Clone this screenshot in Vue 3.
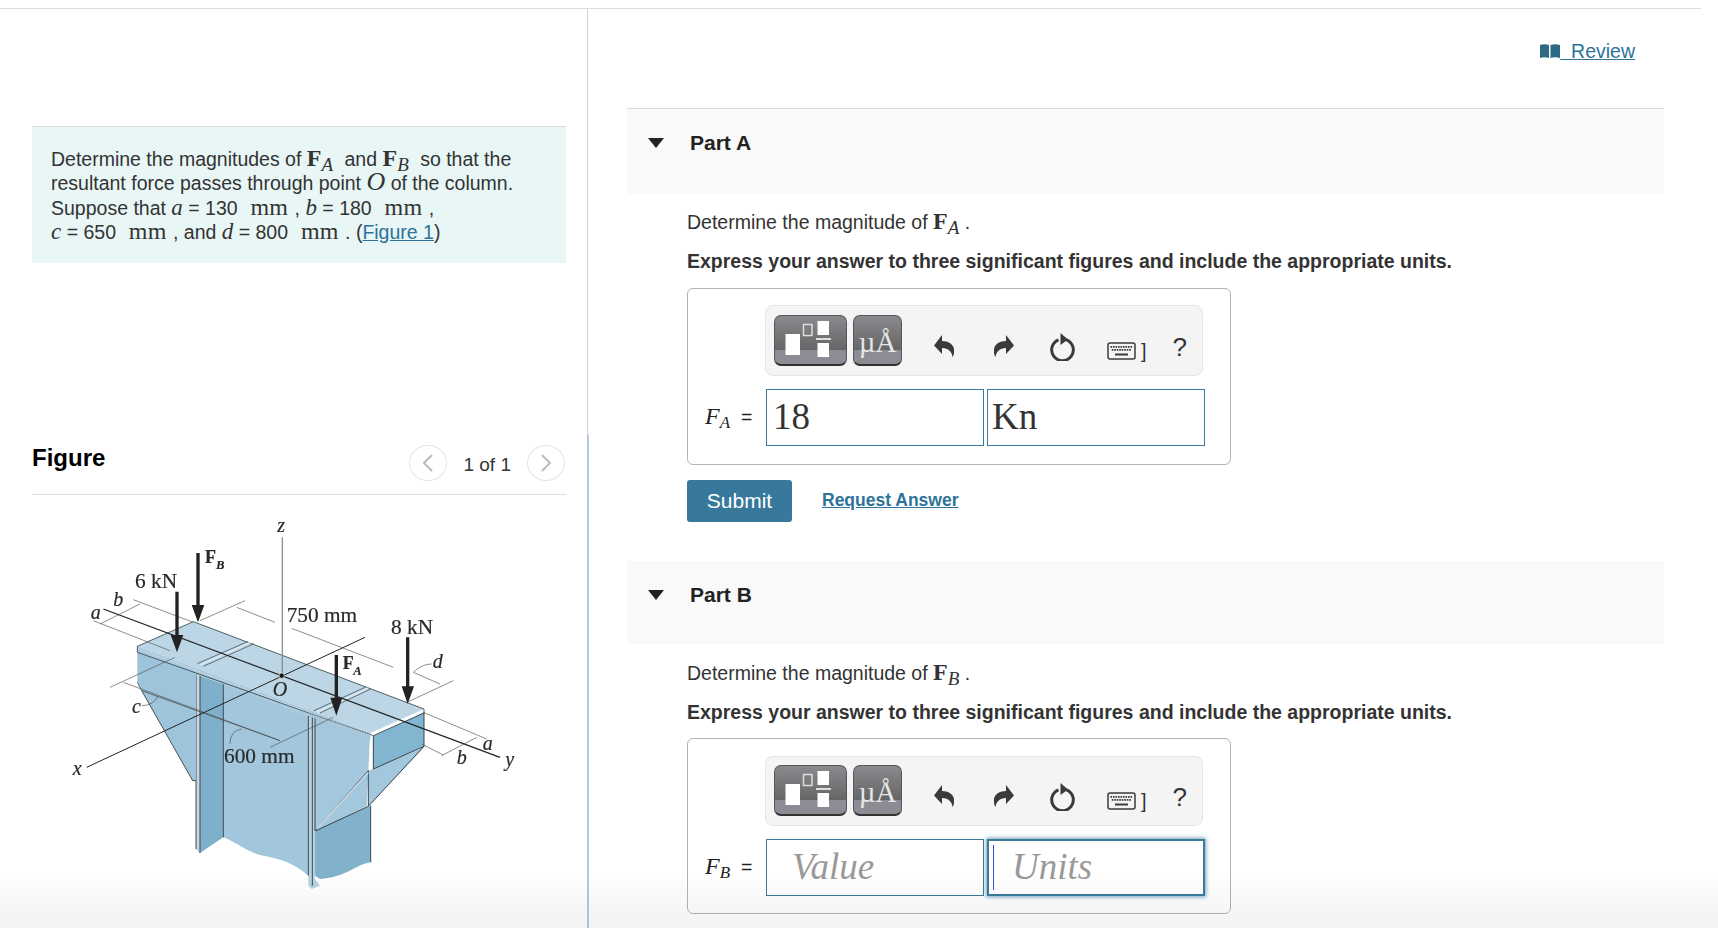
<script setup>
const parts = [
  { id: 'a', title: 'Part A', sub: 'A', value: '18', units: 'Kn', filled: true },
  { id: 'b', title: 'Part B', sub: 'B', value: 'Value', units: 'Units', filled: false }
]
const keyRows = [
  [0, 1, 2, 3, 4, 5, 6, 7, 8],
  [0.5, 1.5, 2.5, 3.5, 4.5, 5.5, 6.5, 7.5]
]
</script>

<template>
  <div class="page">
    <div class="columns">
      <aside class="left">
        <div class="intro">
          Determine the magnitudes of <b class="m">F</b><sub class="ms">A</sub> and <b class="m">F</b><sub class="ms">B</sub> so that the<br />
          resultant force passes through point <i class="mi big">O</i> of the column.<br />
          Suppose that <i class="mi">a</i> = 130 &nbsp;<span class="mu">mm</span> , <i class="mi">b</i> = 180 &nbsp;<span class="mu">mm</span> ,<br />
          <i class="mi">c</i> = 650 &nbsp;<span class="mu">mm</span> , and <i class="mi">d</i> = 800 &nbsp;<span class="mu">mm</span> . (<a class="link" href="#">Figure 1</a>)
        </div>

        <div class="fig-head">
          <h2>Figure</h2>
          <div class="pager">
            <span class="circle"><svg width="12" height="20" viewBox="0 0 12 20"><path d="M10 2 2 10l8 8" fill="none" stroke="#bbb" stroke-width="2" /></svg></span>
            <span class="count">1 of 1</span>
            <span class="circle"><svg width="12" height="20" viewBox="0 0 12 20"><path d="m2 2 8 8-8 8" fill="none" stroke="#bbb" stroke-width="2" /></svg></span>
          </div>
        </div>

        <svg class="figure" width="480" height="418" viewBox="0 0 1440 1254">
          <!-- column -->
          <path d="M420 500 490 525V985L420 1032 408 1020V480Z" fill="#7fb0cb" />
          <path d="M408 480h12v552l-12-12Z" fill="#c9d6de" />
          <path d="M490 525 745 620V1100C700 1060 660 1050 610 1040 560 1030 530 1000 490 985Z" fill="#a2c6db" />
          <path d="M745 620 765 620V1110L780 1130 755 1140 745 1130Z" fill="#b8d2e0" />
          <path d="M765 960 932 890V1060C890 1065 860 1105 780 1110L765 1100Z" fill="#82b1cb" />
          <path d="M408 480V1020M420 500V1032M490 525V985M745 620V1100M757 620V1130M932 890V1060" stroke="#3d4a52" stroke-width="3" fill="none" />
          <!-- beam left -->
          <path d="M232 430 408 495V815H398L245 545 232 520Z" fill="#9dc4da" />
          <path d="M232 520 245 545 660 695" fill="none" stroke="#333" stroke-width="2" />
          <path d="M245 545 398 815H408" fill="none" stroke="#333" stroke-width="2.500" />
          <!-- right bracket -->
          <path d="M765 612 930 680 920 892 765 965Z" fill="#a3c7dc" />
          <path d="M940 680 1092 610V712L940 780Z" fill="#82b5d0" />
          <path d="M925 785 1092 715 925 892Z" fill="#a3c7dc" />
          <path d="M765 965 925 785M925 785V892L768 965M925 892 1092 712M940 680V780L1092 712V610M765 612V965" fill="none" stroke="#39454d" stroke-width="3" />
          <path d="M770 960 925 790" stroke="#c9d6de" stroke-width="5" />
          <!-- top plate -->
          <path d="M232 412 400 338 1092 600 932 672Z" fill="#bcd6e5" />
          <path d="M232 412 932 672V690L232 430Z" fill="#a8c8db" />
          <path d="M232 412 400 338 1092 600V612L940 680 232 430Z" fill="none" stroke="#33424b" stroke-width="2.500" />
          <path d="M235 420 935 680" stroke="#e8eef2" stroke-width="2" stroke-dasharray="5 3" />
          <path d="M412 464 565 397M430 472 582 404M760 606 915 535M780 612 932 540" stroke="#4a5a64" stroke-width="2.500" fill="none" />
          <path d="M420 468 572 400M770 610 924 538" stroke="#dce8ef" stroke-width="5" fill="none" />
          <!-- thin dimension lines -->
          <g fill="none" stroke="#555" stroke-width="2">
            <path d="M220 272 400 340M100 335 330 425M420 335 555 275M530 295 645 340M695 358 1000 475" />
            <path d="M1045 578 1180 515M1060 490 1140 525M1060 490Q1085 465 1115 465" />
            <path d="M150 535 345 445M190 520 660 695M630 715 820 625M245 590Q280 590 295 560M510 705Q510 665 545 660" />
            <path d="M1090 610 1280 690M1085 705 1150 738M1145 740 1250 685M120 345 240 285" />
          </g>
          <!-- axes -->
          <path d="M667 85V497" stroke="#8a8f92" stroke-width="4" />
          <path d="M130 300 1320 745" stroke="#222" stroke-width="4" />
          <path d="M80 775 915 385" stroke="#222" stroke-width="3" />
          <circle cx="665" cy="500" r="8" fill="#111" stroke="#fff" stroke-width="2" />
          <!-- forces -->
          <g fill="#222" stroke="none">
            <path d="M346 248h10V378h14l-19 52-19-52h14Z" />
            <path d="M409 132h10V288h14l-19 52-19-52h14Z" />
            <path d="M1038 385h10V532h14l-19 53-18-53h13Z" />
            <path d="M824 438h10V566h13l-18 54-18-54h13Z" />
          </g>
          <!-- labels -->
          <g class="fig-text">
            <text x="225" y="237">6 kN</text>
            <text x="680" y="338">750 mm</text>
            <text x="993" y="375">8 kN</text>
            <text x="492" y="763">600 mm</text>
            <text x="435" y="162" class="bold">F</text><text x="468" y="180" class="sub">B</text>
            <text x="848" y="480" class="bold">F</text><text x="880" y="498" class="sub">A</text>
            <text x="652" y="68" class="ital">z</text>
            <text x="92" y="330" class="ital">a</text>
            <text x="160" y="292" class="ital">b</text>
            <text x="216" y="612" class="ital">c</text>
            <text x="638" y="562" class="ital">O</text>
            <text x="1118" y="477" class="ital">d</text>
            <text x="38" y="797" class="ital">x</text>
            <text x="1336" y="770" class="ital">y</text>
            <text x="1268" y="724" class="ital">a</text>
            <text x="1190" y="764" class="ital">b</text>
          </g>
        </svg>
      </aside>

      <main class="right">
        <div class="review">
          <svg width="20" height="14" viewBox="0 0 20 14"><path d="M0 1c3-1 6-1 9 0v13c-3-1-6-1-9 0ZM10.500 1c3-1 6.500-1 9.500 0v13c-3-1-6.500-1-9.500 0Z" fill="#2d6a85" /></svg>
          <a class="link" href="#">&nbsp;&nbsp;Review</a>
        </div>

        <section v-for="p in parts" :key="p.id" class="part" :class="'part-' + p.id">
          <header class="part-head">
            <span class="tri"></span>
            <span class="part-title">{{ p.title }}</span>
          </header>
          <div class="part-body">
            <p class="prompt">Determine the magnitude of <b class="m">F</b><sub class="ms">{{ p.sub }}</sub> .</p>
            <p class="express">Express your answer to three significant figures and include the appropriate units.</p>
            <div class="answer">
              <div class="toolbar">
                <span class="tbtn wide">
                  <svg width="73" height="51" viewBox="0 0 73 51">
                    <rect x="11.5" y="19" width="14.500" height="21" fill="#fff" />
                    <rect x="29.500" y="9.500" width="8.500" height="11" fill="none" stroke="#ddd" stroke-width="1.500" />
                    <rect x="43.500" y="6" width="11.500" height="14" fill="#fff" />
                    <rect x="42" y="23" width="15" height="2" fill="#ddd" />
                    <rect x="43.500" y="28" width="11.500" height="14" fill="#fff" />
                  </svg>
                </span>
                <span class="tbtn narrow"><span class="mua">µÅ</span></span>
                <svg class="ic undo" width="20" height="22" viewBox="0 0 20 22"><path d="M0 10.500 8 0V6C16 6 21.500 11 20 18.500 19.500 20 19 21.500 18.500 22 18 17 14.500 13 8 13V19Z" fill="#3a3a3a" /></svg>
                <svg class="ic redo" width="20" height="22" viewBox="0 0 20 22"><path d="M20 10.500 12 0V6C4 6-1.500 11 0 18.500 .5 20 1 21.500 1.500 22 2 17 5.500 13 12 13V19Z" fill="#3a3a3a" /></svg>
                <svg class="ic reset" width="25" height="28" viewBox="0 0 25 28">
                  <path d="M8.500 6.800A10.800 10.800 0 1 0 16.500 6.800" fill="none" stroke="#3a3a3a" stroke-width="3" />
                  <path d="M10.500 0 18 6.500 10.500 12Z" fill="#3a3a3a" />
                </svg>
                <svg class="ic kbd" width="29" height="18" viewBox="0 0 29 18">
                  <rect x="1" y="1" width="27" height="16" rx="2" fill="#f4f4f4" stroke="#3a3a3a" stroke-width="1.500" />
                  <g v-for="(row, r) in keyRows" :key="r">
                    <rect v-for="k in row" :key="k" :x="3.500 + k * 2.500" :y="4 + r * 3" width="1.600" height="1.800" fill="#3a3a3a" />
                  </g>
                  <rect x="8" y="11.500" width="13" height="2" fill="#3a3a3a" />
                </svg>
                <span class="bracket">]</span>
                <span class="help">?</span>
              </div>
              <div class="fields">
                <span class="lbl"><i class="lf">F</i><sub class="ls">{{ p.sub }}</sub><span class="eq">=</span></span>
                <div class="inp val" :class="{ ph: !p.filled }">{{ p.value }}</div>
                <div class="inp unit" :class="{ ph: !p.filled, focus: !p.filled }">
                  <span v-if="!p.filled" class="caret"></span>{{ p.units }}
                </div>
              </div>
            </div>
            <div v-if="p.filled" class="actions">
              <button class="submit" type="button">Submit</button>
              <a class="req" href="#">Request Answer</a>
            </div>
          </div>
        </section>
      </main>
    </div>
    <div class="fade"></div>
  </div>
</template>

<style>
html, body { margin: 0; padding: 0; background: #fff; overflow: hidden; }
</style>

<style scoped>
.page {
  position: relative;
  width: 1718px;
  height: 928px;
  overflow: hidden;
  padding-top: 8px;
  box-sizing: border-box;
  font-family: "Liberation Sans", Arial, sans-serif;
  font-size: 19.5px;
  color: #333;
  background: #fff;
}
.columns {
  display: flex;
  width: 1701px;
  height: 920px;
  border-top: 1px solid #ddd;
}
.left {
  width: 587px;
  flex: none;
  padding-left: 32px;
  box-sizing: border-box;
}
.intro {
  width: 534px;
  height: 137px;
  margin-top: 117px;
  padding: 20px 0 0 19px;
  box-sizing: border-box;
  line-height: 24.4px;
  background: #e8f6f6;
  border-top: 1px solid #ddd;
  white-space: nowrap;
}
.m { font-family: "Liberation Serif", serif; font-size: 24px; font-weight: 700; line-height: 0; }
.ms { font-family: "Liberation Serif", serif; font-style: italic; font-size: 19px; line-height: 0; vertical-align: -5px; }
.intro .ms { margin-right: 6px; }
.mi { font-family: "Liberation Serif", serif; font-size: 23px; line-height: 0; }
.mi.big { font-size: 26px; }
.mu { font-family: "Liberation Serif", serif; font-size: 24px; letter-spacing: .2px; line-height: 0; margin: 0 1px 0 2px; }
.link { color: #2d7399; text-decoration: underline; }
.fig-head {
  width: 534px;
  height: 51px;
  margin-top: 181px;
  display: flex;
  justify-content: space-between;
  box-sizing: border-box;
  border-bottom: 1px solid #ddd;
}
.fig-head h2 {
  margin: 0;
  font-size: 24px;
  line-height: 28px;
  color: #000;
}
.pager {
  display: flex;
  align-items: center;
  height: 36px;
  margin-top: 1px;
  margin-right: 1px;
}
.circle {
  width: 38px;
  height: 36px;
  border: 1px solid #e4e4e4;
  border-radius: 50%;
  box-sizing: border-box;
  display: flex;
  align-items: center;
  justify-content: center;
}
.count { margin: 4px 16px 0 16px; font-size: 19px; }
.figure {
  display: block;
  margin: 14px 0 0 28px;
  filter: blur(.4px);
}
.fig-text text {
  font-family: "Liberation Serif", serif;
  font-size: 64px;
  fill: #2a2a2a;
  stroke: #2a2a2a;
  stroke-width: .6px;
}
.fig-text .bold { font-weight: 700; font-size: 54px; }
.fig-text .sub { font-style: italic; font-weight: 700; font-size: 38px; }
.fig-text .ital { font-style: italic; font-size: 60px; }

.right {
  flex: 1;
  position: relative;
  border-left: 1px solid #c6d4e1;
  padding-left: 39px;
}
.right::after {
  content: "";
  position: absolute;
  left: -1px;
  top: 426px;
  bottom: 0;
  width: 2px;
  background: #b9c9da;
}
.review {
  height: 99px;
  width: 1008px;
  padding-top: 31px;
  box-sizing: border-box;
  display: flex;
  justify-content: flex-end;
  align-items: flex-start;
  line-height: 22px;
}
.review svg { margin-top: 4px; }
.part { width: 1037px; }
.part-a { height: 453px; }
.part-head {
  display: flex;
  align-items: flex-start;
  background: #f9f9f9;
  box-sizing: border-box;
}
.part-a .part-head { height: 86px; border-top: 1px solid #ddd; padding-top: 21px; }
.part-b .part-head { height: 83px; padding-top: 21px; }
.tri {
  width: 0;
  height: 0;
  margin: 8px 0 0 21px;
  border-left: 8px solid transparent;
  border-right: 8px solid transparent;
  border-top: 10px solid #222;
}
.part-title {
  margin-left: 26px;
  font-size: 21px;
  line-height: 25px;
  font-weight: 700;
  color: #222;
}
.part-body { padding-left: 60px; }
.prompt { margin: 0; padding-top: 17px; line-height: 22px; }
.part-b .prompt { padding-top: 18px; }
.express { margin: 0; padding-top: 17px; font-weight: 700; line-height: 22px; }
.answer {
  width: 544px;
  height: 177px;
  margin-top: 16px;
  padding: 16px 0 0 77px;
  box-sizing: border-box;
  border: 1px solid #b3b3b3;
  border-radius: 6px;
  background: #fff;
}
.part-b .answer { margin-top: 15px; padding-top: 17px; height: 176px; }
.toolbar {
  position: relative;
  width: 438px;
  height: 71px;
  box-sizing: border-box;
  padding: 9px 0 0 8px;
  display: flex;
  align-items: flex-start;
  background: #f4f4f4;
  border: 1px solid #e5e5e5;
  border-radius: 8px;
}
.part-b .toolbar { height: 70px; padding-top: 8px; }
.tbtn {
  display: block;
  height: 51px;
  box-sizing: border-box;
  border: 1px solid #55555a;
  border-bottom: 2px solid #333;
  border-radius: 7px;
  background: linear-gradient(#8a8a8e 0, #666668 70%, #8d8c94 70%, #8d8c94 100%);
  overflow: hidden;
  flex: none;
}
.tbtn.wide { width: 73px; }
.tbtn.wide svg { display: block; margin: -1px; }
.tbtn.narrow {
  width: 49px;
  margin-left: 6px;
  display: flex;
  align-items: flex-end;
  justify-content: center;
}
.mua {
  font-family: "Liberation Serif", serif;
  font-size: 29px;
  line-height: 44px;
  color: #e6e6e6;
}
.ic { flex: none; }
.undo { margin: 20px 0 0 32px; }
.redo { margin: 20px 0 0 40px; }
.reset { margin: 18px 0 0 36px; }
.kbd { margin: 27px 0 0 32px; }
.bracket { margin: 25px 0 0 5px; font-size: 20px; line-height: 22px; color: #333; }
.help { margin: 17px 0 0 26px; font-size: 26px; line-height: 30px; color: #333; }
.fields {
  display: flex;
  margin-top: 13px;
  margin-left: 1px;
  position: relative;
}
.lbl {
  position: absolute;
  left: -61px;
  top: 14px;
  line-height: 26px;
  white-space: nowrap;
  color: #222;
}
.lf { font-family: "Liberation Serif", serif; font-size: 24px; }
.ls { font-family: "Liberation Serif", serif; font-style: italic; font-size: 17px; line-height: 0; vertical-align: -4px; }
.eq { margin-left: 11px; font-size: 19.500px; }
.inp {
  height: 57px;
  box-sizing: border-box;
  border: 1px solid #3a7a9c;
  font-family: "Liberation Serif", serif;
  font-size: 37px;
  line-height: 54px;
  color: #333;
  position: relative;
  flex: none;
}
.inp.val { width: 218px; padding-left: 6px; }
.inp.unit { width: 218px; margin-left: 3px; padding-left: 4px; }
.inp.ph { color: #999; font-style: italic; padding-left: 25px; }
.inp.focus {
  border-width: 2px;
  padding-left: 23px;
  line-height: 52px;
  box-shadow: 0 0 4px 1px rgba(58, 122, 156, .7);
}
.caret {
  position: absolute;
  left: 4px;
  top: 4px;
  width: 1px;
  height: 45px;
  background: #3458d0;
}
.actions {
  display: flex;
  align-items: center;
  margin-top: 15px;
}
.submit {
  width: 105px;
  height: 42px;
  padding: 0;
  border: 0;
  border-radius: 3px;
  background: #37789b;
  color: #fff;
  font-family: "Liberation Sans", Arial, sans-serif;
  font-size: 21px;
}
.req {
  margin-left: 30px;
  font-size: 17.500px;
  font-weight: 700;
  color: #2d7399;
  text-decoration: underline;
  position: relative;
  top: -1px;
}
.fade {
  position: absolute;
  left: 0;
  right: 0;
  bottom: 0;
  height: 58px;
  background: linear-gradient(rgba(0, 0, 0, 0), rgba(0, 0, 0, .05));
  pointer-events: none;
}
</style>
